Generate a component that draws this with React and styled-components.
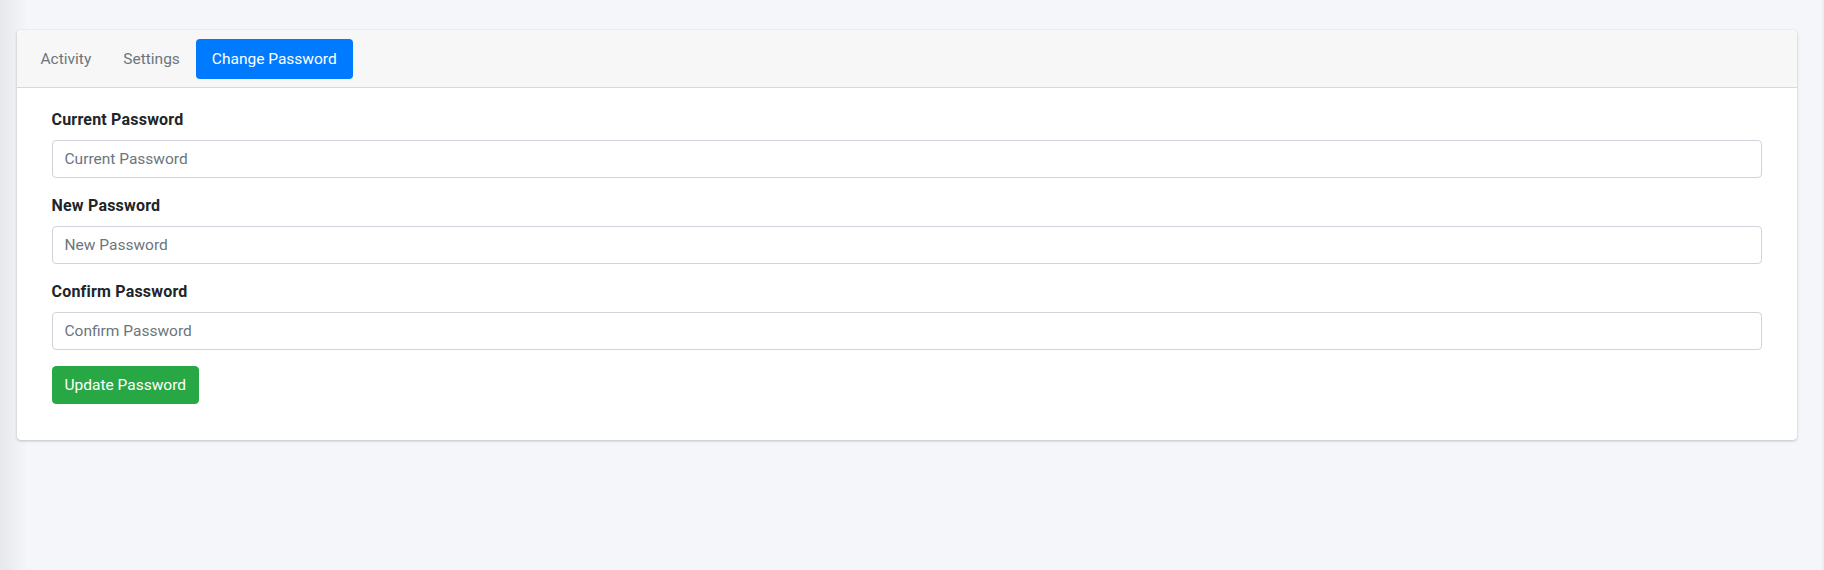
import React from "react";
import styled, { createGlobalStyle } from "styled-components";

const GlobalStyle = createGlobalStyle`
  html, body { margin: 0; padding: 0; }
  body {
    background: #f4f6f9;
    font-family: Roboto, "Liberation Sans", sans-serif;
    font-size: 15.5px;
    line-height: 1.5;
    color: #212529;
  }
  * { box-sizing: border-box; }
`;

const Page = styled.div`
  position: relative;
  min-height: 570px;
  padding: 30px 25px 0 16.5px;
  border-right: 2px solid #eceef1;
  &::before {
    content: "";
    position: absolute;
    left: 0;
    top: 0;
    bottom: 0;
    width: 28px;
    background: linear-gradient(to right, rgba(0, 0, 0, 0.06), rgba(0, 0, 0, 0));
    pointer-events: none;
  }
`;

const Card = styled.div`
  position: relative;
  background: #fff;
  border-radius: 4px;
  box-shadow: 0 0 1px rgba(0, 0, 0, 0.125), 0 1px 3px rgba(0, 0, 0, 0.2);
  overflow: hidden;
`;

const CardHeader = styled.div`
  background: #f7f7f7;
  border-bottom: 1px solid rgba(0, 0, 0, 0.125);
  padding: 9px 8px 8px;
`;

const Nav = styled.ul`
  display: flex;
  list-style: none;
  margin: 0;
  padding: 0;
`;

const NavLink = styled.a`
  display: block;
  padding: 8px 16px;
  border-radius: 4px;
  font-size: 15.5px;
  line-height: 24px;
  text-decoration: none;
  cursor: pointer;
  color: ${(p) => (p.$active ? "#fff" : "#6c757d")};
  background: ${(p) => (p.$active ? "#007bff" : "transparent")};
`;

const CardBody = styled.div`
  padding: 20px 35px;
`;

const FormGroup = styled.div`
  margin-bottom: 16px;
`;

const Label = styled.label`
  display: block;
  font-weight: 700;
  font-size: 16px;
  letter-spacing: 0.2px;
  line-height: 24px;
  margin-bottom: 8px;
  color: #212529;
`;

const Input = styled.input`
  display: block;
  width: 100%;
  height: 38px;
  padding: 6px 12px;
  font-family: inherit;
  font-size: 15.5px;
  line-height: 24px;
  color: #495057;
  background: #fff;
  border: 1px solid #ced4da;
  border-radius: 4px;
  outline: none;
  &::placeholder { color: #6c757d; opacity: 1; }
`;

const Button = styled.button`
  display: inline-block;
  height: 38px;
  padding: 6px 12px;
  font-family: inherit;
  font-size: 15.5px;
  line-height: 24px;
  color: #fff;
  background: #28a745;
  border: 1px solid #28a745;
  border-radius: 4px;
  cursor: pointer;
`;

const tabs = ["Activity", "Settings", "Change Password"];
const fields = ["Current Password", "New Password", "Confirm Password"];

export default function App() {
  return (
    <>
      <GlobalStyle />
      <Page>
        <Card>
          <CardHeader>
            <Nav>
              {tabs.map((t) => (
                <li key={t}>
                  <NavLink $active={t === "Change Password"}>{t}</NavLink>
                </li>
              ))}
            </Nav>
          </CardHeader>
          <CardBody>
            {fields.map((f) => (
              <FormGroup key={f}>
                <Label>{f}</Label>
                <Input type="password" placeholder={f} />
              </FormGroup>
            ))}
            <FormGroup>
              <Button type="button">Update Password</Button>
            </FormGroup>
          </CardBody>
        </Card>
      </Page>
    </>
  );
}
